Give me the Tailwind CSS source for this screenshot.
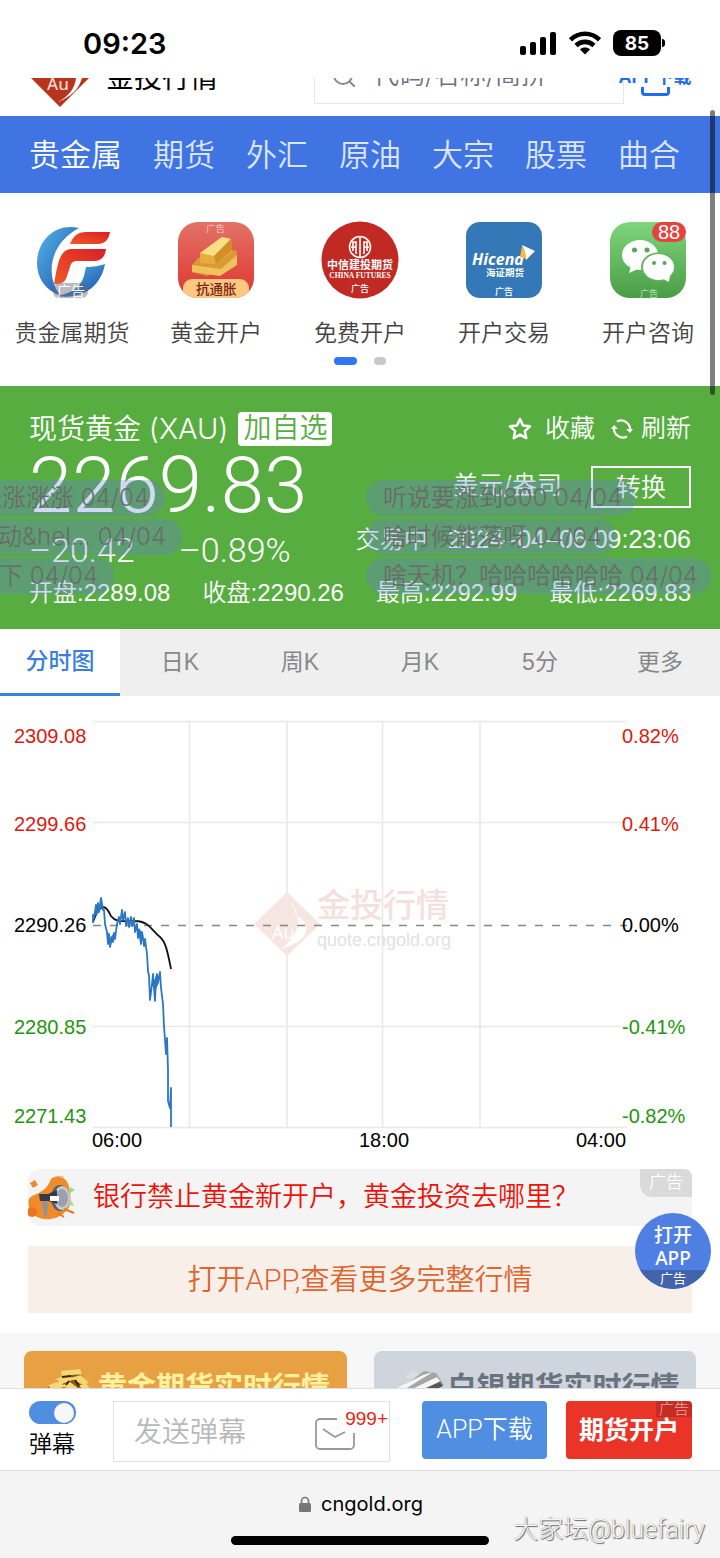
<!DOCTYPE html>
<html lang="zh-CN">
<head>
<meta charset="utf-8">
<meta name="viewport" content="width=device-width, initial-scale=1">
<title>现货黄金 (XAU) - 金投行情</title>
<script src="https://cdn.jsdelivr.net/npm/@tailwindcss/browser@4"></script>
</head>
<body class="bg-white text-black font-[350] font-['Liberation_Sans','Noto_Sans_CJK_SC',sans-serif]">
<div class="relative flex min-h-screen flex-col overflow-hidden">

  <!-- Phone status bar -->
  <div class="flex h-[78px] shrink-0 items-center justify-between pt-2 pr-[55px] pl-[83px]">
    <span class="font-['Inter',sans-serif] text-[29px] leading-none font-semibold">09:23</span>
    <div class="flex items-center gap-3">
      <svg class="h-6 w-[38px]" viewBox="0 0 38 24"><rect x="1" y="15" width="6" height="9" rx="2"/><rect x="11" y="11" width="6" height="13" rx="2"/><rect x="21" y="6" width="6" height="18" rx="2"/><rect x="31" y="1" width="6" height="23" rx="2"/></svg>
      <svg class="h-6 w-8" viewBox="0 0 32 24" fill="none" stroke="#000" stroke-width="4.6"><path d="M1.500 8.800C9.700 .8 22.300 .8 30.500 8.800"/><path d="M7 14.500c5-4.800 13-4.800 18 0"/><path d="M16 23.500l-5-5c2.800-2.600 7.200-2.600 10 0z" fill="#000" stroke="none"/></svg>
      <div class="flex items-center gap-px">
        <span class="flex h-[26px] w-12 items-center justify-center rounded-lg bg-black font-['Inter',sans-serif] text-[19px] leading-none font-bold text-white">85</span>
        <span class="h-2 w-[3px] rounded-r-full bg-black"></span>
      </div>
    </div>
  </div>

  <!-- Site header, partly scrolled under the status bar -->
  <header class="flex h-[38px] shrink-0 items-end overflow-hidden pr-7 pl-[30px]">
    <svg class="mb-[9px] h-[60px] w-[60px] shrink-0" viewBox="0 0 60 60"><path d="M30 1 60 30 30 60 0 30z" fill="#b8341c"/><path d="M46 26c1 12-5 22-18 29 15-6 23-15 25-29z" fill="#fff"/><text x="17" y="43" font-size="17" font-family="Noto Sans" font-weight="500" fill="#f7d9cf">Au</text></svg>
    <span class="mb-[23px] ml-4 text-[28px] leading-7 font-normal">金投行情</span>
    <label class="mr-[-2px] mb-3 ml-auto flex h-14 w-[310px] items-center gap-[18px] border border-gray-200 pl-[18px]">
      <svg class="h-[22px] w-[22px] shrink-0" viewBox="0 0 22 22" fill="none" stroke="#888" stroke-width="2"><circle cx="10" cy="10" r="9"/><path d="m16 16 6 6"/></svg>
      <input type="search" aria-label="搜索" placeholder="代码/名称/简拼" class="w-full min-w-0 bg-transparent pb-1 font-['Inter','Noto_Sans_CJK_SC'] text-[26px] placeholder:text-gray-500 focus:outline-none">
    </label>
    <a href="#" class="mb-5 -ml-1 flex w-[74px] shrink-0 flex-col items-center text-[18px] leading-5 font-bold whitespace-nowrap text-[#1d6cf2]">APP下载<span class="h-[9px] w-[29px] rounded-b-sm border-[3px] border-t-0 border-[#1d6cf2]"></span></a>
  </header>

  <nav class="flex h-[77px] shrink-0 items-center gap-[31px] bg-[#4074e3] pt-[3px] pl-[29px] text-[31px] whitespace-nowrap text-[#dbe5ff]">
    <a href="#" class="text-white">贵金属</a><a href="#">期货</a><a href="#">外汇</a><a href="#">原油</a><a href="#">大宗</a><a href="#">股票</a><a href="#">曲合</a>
  </nav>

  <!-- Shortcuts -->
  <section class="flex h-[193px] shrink-0 flex-col pt-7">
    <div class="grid grid-cols-5 text-[23px] leading-8 text-[#444]">
      <a href="#" class="flex flex-col items-center gap-[18px]">
        <svg class="h-[78px] w-[78px]" viewBox="0 0 78 78">
          <defs><linearGradient id="lb" x2="1" y2="1"><stop stop-color="#55b4ea"/><stop offset="1" stop-color="#1b4fa5"/></linearGradient><linearGradient id="lr" x1="1" x2="0" y2="1"><stop stop-color="#d91f26"/><stop offset="1" stop-color="#f05a28"/></linearGradient></defs>
          <path d="M46 7C20 1 4 22 4 42c0 15 8 27 24 33C13 58 14 24 46 7z" fill="url(#lb)"/>
          <path d="M72 43C68 65 50 79 24 75c15-3 23-8 27-20l2-9c8 0 13-1 19-3z" fill="url(#lb)"/>
          <path d="M37 23c3-8 8-12 16-12h24c-1 7-5 12-12 12z" fill="url(#lr)"/><path d="M21 63c4-22 6-35 18-35h34c-1 8-5 12-12 12H44c-4 0-6 2-7 6l-4 12c-2 4-6 5-12 5z" fill="url(#lr)"/>
          <rect x="20" y="62" width="35" height="15" rx="6" fill="#667" opacity=".45"/><text x="24" y="75" font-size="14" fill="#fff">广告</text>
        </svg>贵金属期货</a>
      <a href="#" class="flex flex-col items-center gap-[18px]">
        <svg class="h-[78px] w-[78px]" viewBox="0 0 78 78">
          <defs><linearGradient id="rg" x2="0" y2="1"><stop stop-color="#e27368"/><stop offset="1" stop-color="#e0352d"/></linearGradient><clipPath id="sq"><rect x="1" y="1" width="76" height="76" rx="20"/></clipPath></defs>
          <g clip-path="url(#sq)"><rect width="78" height="78" fill="url(#rg)"/><rect x="6" y="58" width="66" height="30" rx="9" fill="#fbc880"/></g>
          <path d="m15 44 6-7 31-9 8 2-1 12-29 13-15-4z" fill="#d99a35"/><path d="m15 44 29 4 16-14v10L43 55l-28-4z" fill="#efc25b"/><path d="m23 32 22-16 9 2 1 13-16 12-16-1z" fill="#e6ac3c"/><path d="m23 32 22-16 9 2-17 17z" fill="#fae084"/><path d="m37 35 17-17 1 11-16 14z" fill="#cf902c"/>
          <text x="29" y="11" font-size="9.500" fill="#f6d0cb">广告</text><text x="19" y="73" font-size="13.500" font-weight="500" fill="#7c2418">抗通胀</text>
        </svg>黄金开户</a>
      <a href="#" class="flex flex-col items-center gap-[18px]">
        <svg class="h-[78px] w-[78px]" viewBox="0 0 78 78" text-anchor="middle" fill="#fff"><circle cx="39" cy="39" r="38.500" fill="#c02a22"/>
          <g fill="none" stroke="#fff" stroke-width="1.600"><circle cx="39" cy="26" r="10.500"/><path d="M39 16v20M35 33V21h-3v9M43 33V21h3v9M30 26h5m8 0h5"/></g>
          <text x="39" y="48" font-size="11" font-weight="700">中信建投期货</text><text x="39" y="57" font-size="7.500" font-family="Liberation Serif" font-weight="700">CHINA FUTURES</text><text x="39" y="71" font-size="9" font-weight="500">广告</text></svg>免费开户</a>
      <a href="#" class="flex flex-col items-center gap-[18px]">
        <svg class="h-[78px] w-[78px]" viewBox="0 0 78 78" text-anchor="middle" fill="#fff"><rect x="1" y="1" width="76" height="76" rx="14" fill="#3478b8"/>
          <text x="33" y="44" font-size="16" font-family="Open Sans" font-style="italic" font-weight="700">Hicend</text><path d="m57 24 13 6-9 9-1-8z"/><path d="m57 25 3 6 1 7-6-2z" fill="#f6bd38"/>
          <text x="40" y="55" font-size="9.500" font-weight="700">海证期货</text><text x="39" y="74" font-size="9" font-weight="500">广告</text></svg>开户交易</a>
      <a href="#" class="flex flex-col items-center gap-[18px]">
        <svg class="h-[78px] w-[78px]" viewBox="0 0 78 78"><defs><linearGradient id="gg" x2="0" y2="1"><stop stop-color="#7fd57b"/><stop offset="1" stop-color="#4a9d45"/></linearGradient></defs><rect x="1" y="1" width="76" height="76" rx="20" fill="url(#gg)"/>
          <ellipse cx="31" cy="34" rx="18" ry="15" fill="#fff"/><path d="m22 45-2 7 9-4z" fill="#fff"/><circle cx="25.500" cy="29" r="2.500" fill="#55a850"/><circle cx="38" cy="29" r="2.500" fill="#55a850"/>
          <ellipse cx="49" cy="46" rx="17" ry="14.500" fill="#61b45c"/><ellipse cx="49.500" cy="46" rx="15.500" ry="13" fill="#fff"/><path d="m52 57 9-3-1 7z" fill="#fff"/><circle cx="45" cy="42" r="2" fill="#55a850"/><circle cx="55.500" cy="42" r="2" fill="#55a850"/>
          <rect x="43" y="1" width="34" height="20" rx="10" fill="#e4443f"/><text x="60" y="18" font-size="20" text-anchor="middle" fill="#fff">88</text><text x="40" y="76" font-size="9" text-anchor="middle" fill="#cfe9cc">广告</text></svg>开户咨询</a>
    </div>
    <div class="mt-2 flex justify-center gap-[17px]"><span class="h-2 w-[23px] rounded-full bg-[#3076f5]"></span><span class="h-2 w-3 rounded-full bg-[#c9c9c9]"></span></div>
  </section>

  <!-- Quote panel -->
  <section class="relative h-[243px] shrink-0 overflow-hidden bg-[#57ad3f] px-[29px] pt-[25px] text-white">
    <div class="flex h-9 items-center text-[28px]">
      <h1>现货黄金 <span class="font-['Inter'] text-[29px]">(XAU)</span></h1>
      <button class="ml-[10px] h-[34px] rounded-sm bg-white px-[5px] text-[28px] leading-[34px] text-[#57ad3f]">加自选</button>
      <button class="ml-auto flex items-center gap-[13px] text-[25px]"><svg class="h-6 w-6" viewBox="0 0 24 24" fill="none" stroke="#fff" stroke-width="2.500" stroke-linejoin="round"><path d="m12 2 3 6.500 7 .8-5.200 4.800 1.500 7L12 17.600l-6.300 3.500 1.500-7L2 9.300l7-.8z"/></svg>收藏</button>
      <button class="ml-4 flex items-center gap-2 text-[25px]"><svg class="h-[22px] w-[22px]" viewBox="0 0 22 22" fill="none" stroke="#fff" stroke-width="2.200"><path d="M6 3.500a9 9 0 0 1 13 9M16 18.500a9 9 0 0 1-13-9"/><path d="m15 11 4 4 3-4zM0 11l3-4 4 4z" fill="#fff" stroke="none"/></svg>刷新</button>
    </div>
    <div class="flex h-[78px] items-center">
      <strong class="font-['Roboto'] text-[78px] leading-none font-light">2269.83</strong>
      <span class="ml-auto font-['Inter','Noto_Sans_CJK_SC'] text-[25px]">美元/盎司</span>
      <button class="mt-[2px] ml-[29px] h-[42px] w-[100px] border-2 border-white text-[25px] leading-9">转换</button>
    </div>
    <div class="flex h-[50px] items-center text-[24px]">
      <span class="font-['Roboto'] text-[34px]">–20.42</span><span class="ml-[44px] font-['Roboto'] text-[34px]">–0.89%</span>
      <span class="mb-5 ml-auto flex items-center">交易中<time class="ml-5 text-[25px]">2024–04–06 09:23:06</time></span>
    </div>
    <dl class="flex h-9 items-center justify-between text-[24px]">
      <div class="flex"><dt>开盘:</dt><dd>2289.08</dd></div><div class="flex"><dt>收盘:</dt><dd>2290.26</dd></div><div class="flex"><dt>最高:</dt><dd>2292.99</dd></div><div class="flex"><dt>最低:</dt><dd>2269.83</dd></div>
    </dl>
    <!-- Floating comments -->
    <div class="absolute top-[94px] left-0 flex flex-col items-start gap-[3px] font-['Inter','Noto_Sans_CJK_SC'] text-[24px] leading-9 whitespace-nowrap text-[#6b6b6b]">
      <span class="flex w-[165px] justify-end rounded-r-full bg-[#6b7fe9]/30 pr-4">涨涨涨涨 04/04</span>
      <span class="flex w-[182px] justify-end rounded-r-full bg-[#6b7fe9]/30 pr-4">动&amp;hel... 04/04</span>
      <span class="flex w-[114px] justify-end rounded-r-full bg-[#6b7fe9]/30 pr-4">下 04/04</span>
    </div>
    <div class="absolute top-[94px] left-[366px] flex flex-col items-start gap-[3px] font-['Inter','Noto_Sans_CJK_SC'] text-[24px] leading-9 whitespace-nowrap text-[#6b6b6b]">
      <span class="w-[270px] rounded-full bg-[#6b7fe9]/30 pl-[17px]">听说要涨到800 04/04</span>
      <span class="w-[250px] rounded-full bg-[#6b7fe9]/30 pl-[17px]">啥时候能落呀 04/04</span>
      <span class="w-[345px] rounded-full bg-[#6b7fe9]/30 pl-[17px]">啥天机？哈哈哈哈哈哈 04/04</span>
    </div>
  </section>

  <!-- Chart period -->
  <div role="tablist" class="grid h-[67px] shrink-0 grid-cols-6 bg-[#efefef] text-[23px] font-normal text-[#888]">
    <button role="tab" aria-selected="true" class="border-b-[3px] border-[#3b82e0] bg-white font-medium text-[#3b7fdc]">分时图</button>
    <button role="tab">日K</button><button role="tab">周K</button><button role="tab">月K</button><button role="tab">5分</button><button role="tab">更多</button>
  </div>

  <svg class="w-full shrink-0" viewBox="0 0 720 473" font-size="20" font-weight="400" role="img" aria-label="分时图">
    <path d="M93 25.500h534M93 126.500h534M93 330.500h534M93 431.500h534M189.500 25v406M287 25v406M382.500 25v406M480 25v406" stroke="#e8e8e8" stroke-width="1.500"/>
    <path d="m287 196 33 32-33 32-33-32z" fill="#f7e5e2"/><path d="M289 203c13 17 13 34-8 50 26-7 32-22 18-32-5-4-4-8-10-18z" fill="#fff"/><text x="272" y="243" font-size="18" fill="#fff" font-family="Noto Sans">Au</text>
    <text x="317" y="221" font-size="33" font-weight="500" font-family="Noto Sans CJK SC" fill="#f5e0dd">金投行情</text><text x="317" y="250" font-size="18" fill="#e2e2e2">quote.cngold.org</text>
    <path d="M93 229.500h534" stroke="#888" stroke-width="1.500" stroke-dasharray="8 9"/>
    <path d="M93 226c2-6 5-14 10-15 4 0 6 5 8 9 6 8 13 4 24 5 14 0 17 10 25 16 6 5 8 17 11 32" fill="none" stroke="#111" stroke-width="1.800"/>
    <path d="M93 227V219L94 222 96 209 97 215 98 207 99 216 101 202 103 214 104 214 105 228 107 236 108 248 109 240 110 251 112 241 113 246 114 237 115 243 117 228 119 221 120 228 122 214 123 224 125 216 126 230 128 222 129 231 131 221 132 230 134 222 135 236 137 228 138 242 139 234 141 248 142 236 143 242 144 250 145 243 147 258 148 275 149 280 150 304 152 288 153 278 154 292 155 305 156 282 157 278 158 286 160 276 161 292 163 308 164 330 165 344 166 358 167 342 168 374 168 405 170 412 171 392 171 431" fill="none" stroke="#2b76c5" stroke-width="1.800" stroke-linejoin="round"/>
    <path d="M95 219l7-10M108 237l2 9 4-7M138 233l4 7M152 290l5-8M155 292l3-7" fill="none" stroke="#2b76c5" stroke-width="3"/>
    <g fill="#e0180d"><text x="14" y="47">2309.08</text><text x="14" y="135">2299.66</text><text x="622" y="47">0.82%</text><text x="622" y="135">0.41%</text></g>
    <text x="14" y="236">2290.26</text><text x="622" y="236">0.00%</text>
    <g fill="#23950c"><text x="14" y="338">2280.85</text><text x="14" y="427">2271.43</text><text x="622" y="338">-0.41%</text><text x="622" y="427">-0.82%</text></g>
    <text x="92" y="451">06:00</text><text x="359" y="451">18:00</text><text x="576" y="451">04:00</text>
  </svg>

  <!-- Promotions -->
  <div class="mx-7 flex flex-col gap-5">
    <a href="#" class="flex h-[57px] items-center rounded-l-xl rounded-tr-lg bg-[#f4f4f4] text-[27px] whitespace-nowrap text-[#ee1208]">
      <svg class="mr-[17px] h-12 w-12 shrink-0" viewBox="0 0 48 48"><path d="M23 5c8-7 17 0 18 8 2 10 3 20-4 25-8 8-22 10-31 3-6-6-8-16-2-19 7-3 15-6 19-17z" fill="#f18a28"/><path d="m2 9 5-3 3 5-5 3z" fill="#f18a28"/><circle cx="4" cy="38" r="5" fill="#e7761e"/><ellipse cx="32" cy="24" rx="9" ry="13" fill="#555c6b"/><ellipse cx="34" cy="24" rx="8" ry="12" fill="#c5c9d3"/><ellipse cx="34" cy="24" rx="6" ry="9" fill="#99a0ae"/><path d="M11 20h9l9-4v14l-9-3h-8z" fill="#353b46"/><path d="M22 22h9v5h-9z" fill="#fff"/><path d="m14 27 6 1-1 14h-3z" fill="#8d94a1"/><path d="m36 35 10 4M30 39l6 4" stroke="#e7761e" stroke-width="2"/><path d="m42 13 5 3-5 3zM43 26l3 6-4-1zM33 1l3 2-3 1z" fill="#8be48a"/></svg>
      银行禁止黄金新开户，黄金投资去哪里？
      <span class="ml-auto h-7 w-[52px] shrink-0 self-start rounded-tr-lg rounded-bl-xl bg-[#dadada] text-center text-[17px] leading-7 text-white">广告</span>
    </a>
    <a href="#" class="flex h-[67px] items-center justify-center bg-[#f9efe9] pt-[2px] font-['Roboto','Noto_Sans_CJK_SC'] text-[29px] text-[#dc6530]">打开APP,查看更多完整行情</a>
  </div>
  <a href="#" class="absolute top-[1213px] right-[9px] flex h-[76px] w-[76px] flex-col items-center overflow-hidden rounded-full bg-[#4f7fe2] pt-[11px] font-['Noto_Sans','Noto_Sans_CJK_SC'] text-[19px] leading-[23px] font-medium text-white">打开<span>APP</span><span class="w-full grow bg-[#4264ac] text-center text-[13px] leading-[17px] font-normal">广告</span></a>

  <!-- Market cards, continuing under the bottom bar -->
  <section class="mt-5 h-[55px] shrink-0 overflow-hidden bg-[#f7f7f7] pt-[18px]">
    <div class="grid grid-cols-2 gap-[27px] px-6 text-[29px] leading-10 font-bold whitespace-nowrap">
      <a href="#" class="flex h-20 items-start rounded-lg bg-[#e7a143] pt-[17px] pl-[22px] text-[#fff19f]">
        <svg class="mr-1 h-12 w-12 shrink-0" viewBox="0 0 48 48"><path d="m1 20 12-7 6-8 17 2 8 14 4 27H2z" fill="#8a5a1c"/><path d="m15 3 19-2 2 5-20 2zM10 11l10-4 9 4-13 5zM24 10l11-3 8 8-6 2zM3 17l11-4 5 6-15 3zM17 17l7-3 8 6-9 3zM33 17l8-1 5 7-8 1z" fill="#f5d774"/><path d="m16 9 9-1M20 17l3-4M33 18l-4-6" stroke="#3d2208" stroke-width="2"/></svg>黄金期货实时行情</a>
      <a href="#" class="flex h-20 items-start rounded-lg bg-[#ced5dd] pt-[17px] pl-[22px] text-[#6b7280]">
        <svg class="mr-1 h-12 w-12 shrink-0" viewBox="0 0 48 48"><path d="m9 9 7-6 16 7-5 6z" fill="#ddd"/><path d="M1 23 28 3l12 2 8 12-16 8L6 36z" fill="#a5a5a5"/><path d="m1 20 26-13 10-3L6 23zM14 22l27-13 3 4-23 12z" fill="#f5f5f5"/><path d="m30 20 14-6 3 4-15 7z" fill="#555"/></svg>白银期货实时行情</a>
    </div>
  </section>

  <!-- Comment bar -->
  <form class="flex h-[83px] shrink-0 items-start border-y border-[#dedede] bg-white px-7 pt-3">
    <label class="flex w-[48px] cursor-pointer flex-col items-center gap-[2px] text-[23px] leading-9 whitespace-nowrap">
      <input type="checkbox" checked class="peer sr-only">
      <span class="flex h-[23px] w-[47px] items-center justify-end rounded-full bg-[#4f8ee0] px-[2px]"><span class="h-5 w-5 rounded-full bg-[#f6f6f6]"></span></span>弹幕</label>
    <div class="mr-8 ml-[37px] flex h-[61px] grow items-center border border-[#e0e0e0]">
      <input type="text" aria-label="发送弹幕" placeholder="发送弹幕" class="w-0 min-w-0 grow pt-[2px] pl-5 text-[28px] placeholder:text-[#b8b8b8] focus:outline-none">
      <button type="button" aria-label="消息" class="relative h-full w-[74px]">
        <svg class="mt-1 h-8 w-10" viewBox="0 0 40 32" fill="none" stroke="#999" stroke-width="1.800"><path d="M22 1H5a4 4 0 0 0-4 4v22a4 4 0 0 0 4 4h30a4 4 0 0 0 4-4V15"/><path d="m8 11 12 8 10-5"/></svg>
        <span class="absolute top-[5px] right-px text-[19px] leading-6 text-[#ee2410]">999+</span>
      </button>
    </div>
    <button type="button" class="h-[58px] w-[125px] rounded-sm bg-[#4f8ee0] font-['Roboto','Noto_Sans_CJK_SC'] text-[25px] whitespace-nowrap text-white">APP下载</button>
    <button type="button" class="relative ml-[19px] h-[58px] w-[126px] overflow-hidden rounded-sm bg-[#ea3428] pt-[2px] text-[25px] font-bold whitespace-nowrap text-white">期货开户<span class="absolute top-0 right-0 h-4 w-9 bg-black/15 text-[15px] leading-4 font-light text-white/60">广告</span></button>
  </form>

  <!-- Browser address bar -->
  <footer class="relative flex h-[88px] shrink-0 flex-col items-center bg-[#f4f4f4] pt-[21px]">
    <div class="flex items-center gap-[10px] pl-[2px] font-['Inter',sans-serif] text-[20px] leading-6 font-normal"><svg class="h-4 w-3" viewBox="0 0 12 16"><rect y="7" width="12" height="9" rx="1.500" fill="#77777b"/><path d="M2.500 8V5a3.500 3.500 0 0 1 7 0v3" fill="none" stroke="#77777b" stroke-width="1.600"/></svg>cngold.org</div>
    <span class="mt-5 h-[9px] w-[258px] rounded-full bg-black"></span>
    <span class="absolute right-[15px] bottom-[11px] font-['Roboto','Noto_Sans_CJK_SC'] text-[25px] leading-9 font-light text-[#f7f7f7] [text-shadow:1px_1px_1px_#666,0_0_1px_#777]">大家坛@bluefairy</span>
  </footer>

  <span class="absolute top-[110px] right-[5px] h-[285px] w-[5px] rounded-full bg-black/50"></span>
</div>
</body>
</html>
